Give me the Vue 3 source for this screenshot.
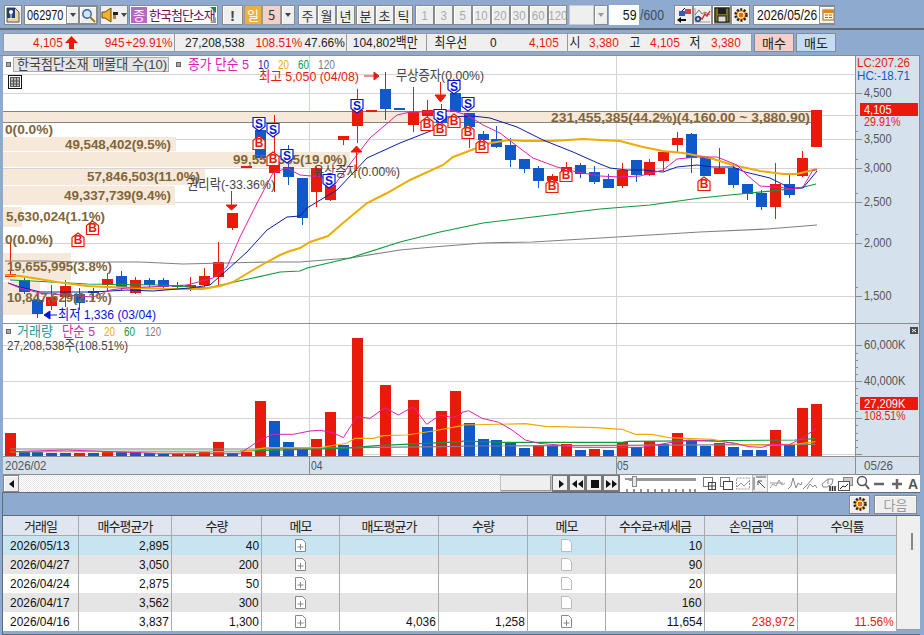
<template>
  <div class="screen">
    <div class="toolbar">
      <button class="tb note">
        <svg width="16" height="16" viewBox="0 0 16 16">
          <path d="M2 1h8l4 4v10H2z" fill="#e8d9a8" stroke="#555" />
          <rect x="2" y="1" width="8" height="10" fill="#243f78" />
          <circle cx="6" cy="5" r="2" fill="#fff" />
          <path d="M6 7v5" stroke="#fff" />
        </svg>
      </button>
      <div class="code-box">
        <span class="code"><span class="sq-left">062970</span></span>
        <button class="tb drop"><i class="caret"></i></button>
        <button class="tb find">
          <svg width="15" height="15" viewBox="0 0 15 15">
            <circle cx="6" cy="6" r="4.2" fill="#cfe6f7" stroke="#36619c" stroke-width="1.4" />
            <path d="M9 9l5 5" stroke="#a8761c" stroke-width="2" />
          </svg>
        </button>
      </div>
      <div class="sound">
        <svg width="19" height="16" viewBox="0 0 19 16">
          <path d="M1 5h3l6-4v14l-6-4H1z" fill="#f0b22a" stroke="#6a4a08" />
          <rect x="12" y="5" width="5" height="3" fill="#222" />
          <rect x="12" y="8" width="3" height="4" fill="#c77b12" />
        </svg>
        <i class="caret"></i>
      </div>
      <div class="name-box">
        <span class="badge">종</span>
        <span class="name">한국첨단소재</span>
        <i class="flag-top"></i>
        <i class="flag-bottom"></i>
      </div>
      <button class="tb bang">!</button>
      <div class="period">
        <span class="day">일</span>
        <span class="five">5</span>
        <button class="tb drop wide"><i class="caret"></i></button>
      </div>
      <div class="seg first"><button v-for="p in periods" :key="p" class="tb cell">{{ p }}</button></div>
      <div class="seg"><button v-for="p in minutes" :key="p" class="tb cell">{{ p }}</button></div>
      <div class="seg nums"><button v-for="n in numbers" :key="n" class="tb cell off"><span class="sq-mid">{{ n }}</span></button></div>
      <div class="blank-combo">
        <span></span>
        <button class="tb drop wide"><i class="caret light"></i></button>
      </div>
      <span class="count"><span class="sq-right">59</span></span>
      <span class="total"><span class="sq-left">/600</span></span>
      <div class="tools">
        <button class="tb tool">
          <svg width="16" height="16" viewBox="0 0 16 16">
            <rect x="9" y="2" width="6" height="5" fill="#d8403a" />
            <rect x="3" y="4" width="6" height="5" fill="#2f5fb5" />
            <path d="M1 13l4-3v2h5v2H5v2z" fill="#111" />
            <path d="M6 4l3-3" stroke="#111" />
          </svg>
        </button>
        <button class="tb tool">
          <svg width="17" height="16" viewBox="0 0 17 16">
            <path d="M1 1v14h15" stroke="#999" fill="none" />
            <path d="M1 8l4-5 3 4 3-2 5 3" stroke="#777" fill="none" />
            <path d="M4 9l4 3 3-5 2 2 3-5" stroke="#e0201c" fill="none" stroke-width="1.4" />
            <circle cx="4" cy="12" r="3" fill="#1c3f7a" />
            <path d="M2.500 12h3M4 10.500v3" stroke="#fff" />
          </svg>
        </button>
        <button class="tb tool dark">
          <svg width="16" height="16" viewBox="0 0 16 16">
            <rect x="1" y="1" width="14" height="14" fill="#7a7420" stroke="#111" />
            <rect x="4" y="1" width="8" height="6" fill="#222" />
            <rect x="4" y="9" width="8" height="6" fill="#ddd" stroke="#222" />
          </svg>
        </button>
        <button class="tb tool">
          <svg width="16" height="16" viewBox="0 0 16 16">
            <circle cx="8" cy="8" r="5.500" fill="#f4a21c" stroke="#222" stroke-width="2.500" stroke-dasharray="2 1.500" />
            <circle cx="8" cy="8" r="3" fill="#e8671a" stroke="#fff" />
          </svg>
        </button>
      </div>
      <div class="date-box">
        <span class="sq-left">2026/05/26</span>
        <button class="tb cal">
          <svg width="13" height="12" viewBox="0 0 13 12">
            <rect x="1" y="1" width="11" height="10" fill="#fff6d8" stroke="#a5671a" />
            <rect x="1" y="1" width="11" height="3" fill="#d88a20" />
            <path d="M3 6h3M7 6h3M3 8.500h3M7 8.500h3" stroke="#c05a10" />
          </svg>
        </button>
      </div>
    </div>

    <div class="divider"></div>

    <div class="infobar">
      <div class="cells">
        <div v-for="(cell, c) in infoCells" :key="c" class="info-cell" :style="{ width: cell.w + 'px' }">
          <span
            v-for="(it, i) in cell.items"
            :key="i"
            class="info-item"
            :class="it.c"
            :style="{ width: it.w + 'px' }"
          ><span class="sq-right">{{ it.t }}</span><svg v-if="it.up" class="up" width="13" height="13" viewBox="0 0 13 13"><path d="M6.500 0L13 7H9v6H4V7H0z" fill="#ea1a0a" /></svg></span>
        </div>
      </div>
      <button class="trade buy">매수</button>
      <button class="trade sell">매도</button>
    </div>

    <div class="chart-wrap">
      <svg class="chart" width="917" height="419" viewBox="3 56 917 419">
        <!-- 그리드 -->
        <rect x="3" y="56" width="852" height="419" fill="#fff" />
        <line v-for="y in gridY" :key="'g' + y" x1="3" x2="855" :y1="y" :y2="y" class="grid" />
        <line v-for="x in [309.500, 616.500]" :key="'v' + x" :x1="x" :x2="x" y1="56" y2="456" class="grid" />

        <!-- 매물대 -->
        <rect v-for="(b, i) in bands" :key="'b' + i" :x="3" :y="b.y" :width="b.w" :height="b.h" fill="#f6e9d9" />
        <line x1="3" x2="811" y1="111.500" y2="111.500" stroke="#8a8378" />
        <line x1="3" x2="811" y1="122.500" y2="122.500" stroke="#8a8378" />

        <!-- 캔들 -->
        <g v-for="c in candles" :key="'c' + c.i">
          <line :x1="c.x" :x2="c.x" :y1="c.wt" :y2="c.wb" :stroke="c.color" />
          <rect :x="c.x - 5.500" :y="c.top" width="11" :height="c.h" :fill="c.color" />
        </g>

        <!-- 이동평균 -->
        <polyline v-for="l in maLines" :key="l.k" :points="l.pts" fill="none" :stroke="l.color" :stroke-width="l.sw" />

        <!-- 매물대 라벨 -->
        <text
          v-for="(t, i) in bandTexts"
          :key="'t' + i"
          :x="t.x"
          :y="t.y"
          :textLength="t.len"
          lengthAdjust="spacingAndGlyphs"
          class="band-text"
        >{{ t.t }}</text>

        <!-- 주석 화살표 -->
        <path d="M364 76h10M374 72l5 4-5 4z" stroke="#ea1a0a" fill="#ea1a0a" />
        <path d="M57 315H50M50 311l-6 4 6 4z" stroke="#0a14d8" fill="#0a14d8" />
        <g v-for="a in arrows" :key="a.x + '-' + a.tip" fill="#ea1a0a" stroke="#ea1a0a">
          <line :x1="a.x" :x2="a.x" :y1="a.from" :y2="a.tip" />
          <path :d="a.head" />
        </g>

        <!-- 범례 상자 -->
        <rect x="6.500" y="62.500" width="4" height="4" fill="#aaa" stroke="#666" />
        <rect x="13.500" y="57.500" width="155" height="14" fill="#e6e6e6" stroke="#aaa" />
        <rect x="176.500" y="62.500" width="4" height="4" fill="#aaa" stroke="#666" />
        <rect x="8.500" y="75.500" width="13" height="13" fill="#fff" stroke="#111" />
        <rect x="10.500" y="77.500" width="9" height="9" fill="#bbb" stroke="#555" />
        <path d="M13.500 78v8M16.500 78v8M11 81h8M11 84h8" stroke="#555" />

        <!-- 거래량 -->
        <rect x="6.500" y="329.500" width="4" height="4" fill="#aaa" stroke="#666" />
        <rect
          v-for="b in volBars"
          :key="'vb' + b.i"
          :x="b.x - 5.500"
          :y="b.y"
          width="11"
          :height="456 - b.y"
          :fill="b.color"
        />
        <polyline v-for="l in volLines" :key="l.k" :points="l.pts" fill="none" :stroke="l.color" :stroke-width="l.sw" />

        <!-- 가격축 -->
        <rect x="855" y="56" width="65" height="419" fill="#d6e1ee" />
        <rect x="3" y="457" width="852" height="18" fill="#d6e1ee" />
        <line x1="3" x2="920" y1="323.500" y2="323.500" stroke="#8d8d8d" />
        <line x1="855.500" x2="855.500" y1="56" y2="475" stroke="#8d8d8d" />
        <line x1="3" x2="920" y1="456.500" y2="456.500" stroke="#8d8d8d" />
        <line x1="3" x2="920" y1="474.500" y2="474.500" stroke="#8d8d8d" />
        <line x1="309.500" x2="309.500" y1="457" y2="474" stroke="#8d8d8d" />
        <line x1="616.500" x2="616.500" y1="457" y2="474" stroke="#8d8d8d" />
        <line x1="919.500" x2="919.500" y1="56" y2="475" stroke="#8d8d8d" />
        <line
          v-for="t in axisTicks"
          :key="'at' + t.y"
          x1="856"
          :x2="t.major ? 862 : 858"
          :y1="t.y"
          :y2="t.y"
          stroke="#8d8d8d"
        />
        <rect x="860" y="103" width="58" height="13" fill="#ea1a0a" />
        <rect x="860" y="397" width="58" height="13" fill="#ea1a0a" />
        <rect x="910" y="327" width="8" height="7" fill="#4a4a4a" />
        <path d="M912 329l4 3M916 329l-4 3" stroke="#fff" />

        <!-- 글자 -->
        <text
          v-for="l in labels"
          :key="l.t + l.y"
          :x="l.x"
          :y="l.y"
          :textLength="l.len"
          lengthAdjust="spacingAndGlyphs"
          class="lbl"
          :class="l.c"
        >{{ l.t }}</text>

        <!-- 매매 마커 -->
        <g v-for="(m, i) in markers" :key="'m' + i">
          <path v-if="m.t === 'S'" :d="sPath(m.x, m.y)" fill="#fff" stroke="#0a14d8" stroke-width="1.200" />
          <path v-else :d="bPath(m.x, m.y)" fill="#fff" stroke="#ea1a0a" stroke-width="1.200" />
          <text :x="m.x" :y="m.y + 4" class="mk" :class="m.t === 'S' ? 'blue' : 'red'">{{ m.t }}</text>
        </g>
      </svg>
    </div>

    <div class="scrollrow">
      <button class="tb sbtn first-btn"><i class="tri-left"></i></button>
      <div class="track"></div>
      <div class="thumb"></div>
      <button class="tb pbtn">
        <svg width="10" height="10" viewBox="0 0 10 10"><path d="M3 1l5 4-5 4z" fill="#111" /></svg>
      </button>
      <button class="tb pbtn">
        <svg width="11" height="10" viewBox="0 0 11 10"><path d="M5 1L0 5l5 4zM11 1L6 5l5 4z" fill="#111" /></svg>
      </button>
      <button class="tb pbtn">
        <svg width="10" height="10" viewBox="0 0 10 10"><rect x="1" y="1" width="8" height="8" fill="#111" /></svg>
      </button>
      <button class="tb pbtn">
        <svg width="11" height="10" viewBox="0 0 11 10"><path d="M0 1l5 4-5 4zM6 1l5 4-5 4z" fill="#111" /></svg>
      </button>
      <div class="slider">
        <svg width="76" height="17" viewBox="0 0 76 17">
          <rect x="5" y="3" width="67" height="3" fill="#999" />
          <rect x="1" y="3" width="4" height="2" fill="#999" />
          <rect x="8.500" y="1.500" width="4" height="10" fill="#e8e8e8" stroke="#888" />
          <path d="M3 14v3M10 14v3M17 14v3M24 14v3M31 14v3M38 14v3M45 14v3M52 14v3M59 14v3M66 14v3M71 14v3" stroke="#222" />
        </svg>
      </div>
      <svg class="chart-tools" width="218" height="17" viewBox="0 0 218 17">
        <g fill="none" stroke="#777">
          <rect x="1.500" y="2.500" width="9" height="9" />
          <rect x="6.500" y="7.500" width="7" height="7" fill="#fff" stroke="#444" />
          <path d="M10 8v6M7 11h6" stroke="#444" />
          <rect x="18.500" y="2.500" width="9" height="9" />
          <rect x="21.500" y="6.500" width="9" height="8" fill="#fff" stroke="#444" />
          <path d="M34.500 3h13v11h-13z" stroke-dasharray="2 1" stroke="#999" />
          <path d="M35 12l4-4 3 3 5-5" stroke="#999" />
        </g>
        <rect x="50.500" y="0" width="15" height="17" fill="#f4f4f4" stroke="#bbb" />
        <g fill="none" stroke="#555">
          <path d="M52 2v13M54 2h10M56 6l7 7M56 6h4M56 6v4" />
          <path d="M68 13l3-4 3 2 3-6 3 5 3-2M68 8h13" stroke="#999" />
          <path d="M86 14l3-3 2-8 3 10 2-5 3 2 1-3" stroke="#888" />
          <path d="M101 14l4-4 6-7M105 14l3-5 3 3 2-2 2 3" stroke="#888" />
          <path d="M120 9l6-5h5l-1 5-5 3h-4zM126 4v5" stroke="#888" />
          <path d="M128 16v-5M130.500 16v-5M133 16v-5" stroke="#222" stroke-width="1.500" />
          <rect x="141.500" y="2.500" width="9" height="8" fill="#ccc" stroke="#888" />
          <rect x="136.500" y="6.500" width="11" height="9" fill="#fff" />
          <path d="M138 14l3-3 2 1 3-3" stroke="#222" />
          <circle cx="160" cy="6" r="4.500" stroke-width="1.500" />
          <path d="M163 9l4 5" stroke-width="2" />
          <path d="M172 9h10M190 9h10M195 4v10" stroke="#666" stroke-width="2.500" />
        </g>
        <text x="206" y="14" class="aa">A</text>
      </svg>
    </div>

    <div class="bottom">
      <div class="bottom-bar">
        <button class="tb gear">
          <svg width="16" height="16" viewBox="0 0 16 16">
            <circle cx="8" cy="8" r="5.500" fill="#f4a21c" stroke="#222" stroke-width="2.500" stroke-dasharray="2 1.500" />
            <circle cx="8" cy="8" r="3" fill="#e8671a" stroke="#fff" />
          </svg>
        </button>
        <button class="tb next">다음</button>
      </div>
      <div class="table-row">
        <table class="grid-table">
          <colgroup>
            <col v-for="w in colWidths" :key="w.k" :style="{ width: w.w + 'px' }" />
          </colgroup>
          <thead>
            <tr>
              <th v-for="h in headers" :key="h.k">{{ h.t }}</th>
            </tr>
          </thead>
          <tbody>
            <tr v-for="(r, i) in rows" :key="r.date" :class="rowClass(i)">
              <td class="date"><span class="sq-mid">{{ r.date }}</span></td>
              <td><span class="sq-right">{{ r.buy }}</span></td>
              <td><span class="sq-right">{{ r.qty }}</span></td>
              <td class="memo">
                <svg width="11" height="13" viewBox="0 0 11 13">
                  <path d="M.5.5h7l3 3v9H.5z" fill="#fff" stroke="#888" />
                  <path d="M5.500 5v6M2.500 8h6" stroke="#888" />
                </svg>
              </td>
              <td><span class="sq-right">{{ r.sell }}</span></td>
              <td><span class="sq-right">{{ r.sellQty }}</span></td>
              <td class="memo">
                <svg width="11" height="13" viewBox="0 0 11 13">
                  <path d="M.5.5h7l3 3v9H.5z" fill="#fff" :stroke="r.sell ? '#888' : '#bbb'" />
                  <path v-if="r.sell" d="M5.500 5v6M2.500 8h6" stroke="#888" />
                </svg>
              </td>
              <td><span class="sq-right">{{ r.fee }}</span></td>
              <td class="up-txt"><span class="sq-right">{{ r.pl }}</span></td>
              <td class="up-txt"><span class="sq-right">{{ r.rate }}</span></td>
            </tr>
          </tbody>
        </table>
        <div class="vscroll"><i></i></div>
      </div>
    </div>
  </div>
</template>

<script setup>
const RED = "#ea1a0a";
const BLU = "#1159c8";

const periods = ["주", "월", "년"];
const minutes = ["분", "초", "틱"];
const numbers = ["1", "3", "5", "10", "20", "30", "60", "120"];

const infoCells = [
  {
    w: 171,
    items: [
      { t: "4,105", w: 74, c: "up-txt", up: true },
      { t: "945", w: 47, c: "up-txt" },
      { t: "+29.91%", w: 48, c: "up-txt" },
    ],
  },
  {
    w: 172,
    items: [
      { t: "27,208,538", w: 70 },
      { t: "108.51%", w: 58, c: "up-txt" },
      { t: "47.66%", w: 42 },
    ],
  },
  { w: 81, items: [{ t: "104,802백만", w: 71 }] },
  {
    w: 141,
    items: [
      { t: "최우선", w: 40 },
      { t: "0", w: 29 },
      { t: "4,105", w: 62, c: "up-txt" },
    ],
  },
  {
    w: 183,
    items: [
      { t: "시", w: 12 },
      { t: "3,380", w: 39, c: "up-txt" },
      { t: "고", w: 21 },
      { t: "4,105", w: 40, c: "up-txt" },
      { t: "저", w: 20 },
      { t: "3,380", w: 41, c: "up-txt" },
    ],
  },
];

// 가로 그리드 (가격 + 거래량)
const gridY = [74.5, 93.5, 115.5, 139.5, 168.5, 202.5, 243.5, 296.5, 345.5, 381.5, 418.5, 454.5];

const bands = [
  { y: 112, h: 10, w: 808 },
  { y: 137, h: 14, w: 173 },
  { y: 152, h: 15, w: 347 },
  { y: 169, h: 16, w: 202 },
  { y: 186, h: 19, w: 172 },
  { y: 207, h: 20, w: 19 },
  { y: 253, h: 27, w: 68 },
  { y: 282, h: 33, w: 37 },
];

const bandTexts = [
  { x: 551, y: 122, len: 259, t: "231,455,385(44.2%)(4,160.00 ~ 3,880.90)" },
  { x: 5, y: 134, len: 48, t: "0(0.0%)" },
  { x: 65, y: 149, len: 106, t: "49,548,402(9.5%)" },
  { x: 233, y: 164, len: 114, t: "99,555,365(19.0%)" },
  { x: 87, y: 181, len: 113, t: "57,846,503(11.0%)" },
  { x: 64, y: 200, len: 107, t: "49,337,739(9.4%)" },
  { x: 6, y: 221, len: 99, t: "5,630,024(1.1%)" },
  { x: 5, y: 244, len: 48, t: "0(0.0%)" },
  { x: 7, y: 271, len: 105, t: "19,655,995(3.8%)" },
  { x: 7, y: 302, len: 105, t: "10,847,629(2.1%)" },
];

// 차트 위 글자: 범례, 주석, 축 눈금
const labels = [
  { x: 17, y: 69, len: 150, t: "한국첨단소재 매물대 수(10)", c: "ink" },
  { x: 188, y: 69, len: 61, t: "종가 단순 5", c: "mag" },
  { x: 258, y: 69, len: 11, t: "10", c: "navy" },
  { x: 278, y: 69, len: 11, t: "20", c: "orange" },
  { x: 298, y: 69, len: 11, t: "60", c: "green" },
  { x: 318, y: 69, len: 17, t: "120", c: "gray" },
  { x: 259, y: 81, len: 100, t: "최고 5,050 (04/08)", c: "red" },
  { x: 396, y: 80, len: 88, t: "무상증자(0.00%)", c: "ink" },
  { x: 187, y: 189, len: 88, t: "권리락(-33.36%)", c: "ink" },
  { x: 313, y: 176, len: 87, t: "유상증자(0.00%)", c: "ink" },
  { x: 58, y: 319, len: 98, t: "최저 1,336 (03/04)", c: "blue" },
  { x: 17, y: 336, len: 36, t: "거래량", c: "teal" },
  { x: 62, y: 336, len: 33, t: "단순 5", c: "mag" },
  { x: 104, y: 336, len: 11, t: "20", c: "orange" },
  { x: 124, y: 336, len: 11, t: "60", c: "green" },
  { x: 145, y: 336, len: 16, t: "120", c: "gray" },
  { x: 7, y: 350, len: 121, t: "27,208,538주(108.51%)", c: "ink" },
  { x: 857, y: 67, len: 53, t: "LC:207.26", c: "red" },
  { x: 857, y: 80, len: 53, t: "HC:-18.71", c: "bluehc" },
  { x: 864, y: 97, len: 27.5, t: "4,500", c: "dim" },
  { x: 864, y: 143, len: 27.5, t: "3,500", c: "dim" },
  { x: 864, y: 172, len: 27.5, t: "3,000", c: "dim" },
  { x: 864, y: 206, len: 27.5, t: "2,500", c: "dim" },
  { x: 864, y: 247, len: 27.5, t: "2,000", c: "dim" },
  { x: 864, y: 300, len: 27.5, t: "1,500", c: "dim" },
  { x: 864, y: 349, len: 41.5, t: "60,000K", c: "dim" },
  { x: 864, y: 385, len: 41.5, t: "40,000K", c: "dim" },
  { x: 864, y: 114, len: 27.5, t: "4,105", c: "white" },
  { x: 864, y: 126, len: 36.5, t: "29.91%", c: "red" },
  { x: 864, y: 408, len: 41.5, t: "27,209K", c: "white" },
  { x: 864, y: 420, len: 41.5, t: "108.51%", c: "red" },
  { x: 5, y: 470, len: 41.5, t: "2026/02", c: "dim" },
  { x: 311, y: 470, len: 11.5, t: "04", c: "dim" },
  { x: 617, y: 470, len: 11.5, t: "05", c: "dim" },
  { x: 864, y: 470, len: 29, t: "05/26", c: "dim" },
];

// [색, 몸통위, 몸통아래, 꼬리위, 꼬리아래]
const rawCandles = [
  ["r", 274, 277, 243, 277], ["b", 280, 292, 278, 294], ["b", 300, 314, 292, 318], ["r", 297, 306, 285, 310],
  ["r", 286, 297, 280, 307], ["b", 294, 303, 288, 310], ["b", 291, 292, 288, 300], ["r", 279, 285, 273, 292],
  ["b", 276, 287, 271, 290], ["r", 280, 293, 277, 294], ["b", 280, 285, 278, 289], ["b", 280, 287, 278, 288],
  ["b", 285, 287, 282, 290], ["r", 285, 287, 277, 291], ["r", 276, 285, 268, 287], ["r", 262, 277, 242, 287],
  ["r", 213, 228, 213, 230], ["r", 166, 167, 166, 167], ["b", 130, 158, 128, 160], ["r", 163, 173, 115, 192],
  ["b", 167, 177, 145, 185], ["b", 178, 218, 178, 225], ["r", 168, 192, 167, 207], ["r", 185, 200, 185, 201],
  ["r", 136, 140, 136, 145], ["r", 110, 126, 89, 143], ["r", 110, 111, 110, 111], ["b", 89, 109, 72, 120],
  ["b", 108, 109, 108, 109], ["r", 112, 125, 87, 132], ["r", 110, 116, 100, 120], ["b", 115, 123, 104, 130],
  ["b", 93, 112, 92, 112], ["b", 113, 127, 113, 148], ["b", 134, 140, 131, 146], ["b", 139, 147, 126, 148],
  ["b", 145, 160, 138, 167], ["b", 159, 169, 159, 173], ["b", 168, 181, 166, 188], ["r", 176, 181, 174, 182],
  ["r", 167, 181, 162, 182], ["b", 165, 174, 163, 178], ["b", 172, 182, 166, 184], ["b", 179, 188, 174, 188],
  ["r", 170, 186, 163, 188], ["b", 160, 175, 160, 182], ["r", 162, 175, 159, 176], ["r", 152, 161, 152, 171],
  ["r", 138, 145, 132, 153], ["b", 134, 158, 133, 173], ["b", 157, 176, 157, 176], ["r", 168, 174, 148, 174],
  ["b", 168, 185, 164, 188], ["b", 184, 194, 184, 200], ["b", 193, 207, 190, 210], ["r", 184, 207, 163, 219],
  ["b", 184, 195, 173, 198], ["r", 158, 176, 151, 177], ["r", 110, 147, 110, 147],
];

const xAt = (i) => Math.round(9.6 + 13.91 * i) + 0.5;

const candles = rawCandles.map((c, i) => ({
  i,
  x: xAt(i),
  color: c[0] === "r" ? RED : BLU,
  top: c[1],
  h: Math.max(c[2] - c[1], 2),
  wt: c[3],
  wb: c[4],
}));

const maLines = [
  {
    k: "ma120",
    color: "#808080",
    sw: 1.2,
    pts: "5,261 43,261 77,262 140,262 183,264 267,262 300,262 350,258 400,250 433,247 483,243 533,242 600,238 650,235 700,232 767,229 817,225",
  },
  {
    k: "ma60",
    color: "#0f9a3c",
    sw: 1.2,
    pts: "10,280 33,281 87,284 160,285 207,288 230,283 253,278 280,272 300,271 307,268 350,258 400,242 440,232 483,223 533,217 600,209 650,205 700,198 740,194 800,188 816,184",
  },
  {
    k: "ma20",
    color: "#efab05",
    sw: 2,
    pts: "5,275 20,276 33,278 57,282 87,286 107,287 140,288 167,289 203,289 220,286 233,282 253,270 267,262 280,255 290,251 300,248 310,242 328,236 343,223 367,203 387,193 410,180 443,165 453,157 477,148 490,143 510,140 523,141 553,141 583,139 600,140 620,141 643,147 663,151 683,153 710,158 733,165 760,171 783,174 797,174 817,169",
  },
  {
    k: "ma10",
    color: "#0a1fa8",
    sw: 1,
    pts: "8,283 20,287 40,292 67,292 93,292 127,290 153,291 190,288 210,285 227,270 247,252 267,230 287,217 300,216 307,208 337,190 367,158 400,143 433,130 447,117 473,116 490,118 517,127 543,140 573,152 600,164 610,168 627,170 643,170 663,172 677,167 697,165 713,167 733,167 745,172 770,178 790,188 803,188 817,171",
  },
  {
    k: "ma5",
    color: "#e020b0",
    sw: 1,
    pts: "8,283 20,288 40,293 67,295 93,297 110,290 127,288 147,287 187,285 213,278 227,267 240,237 257,203 273,173 287,168 300,175 323,177 333,187 353,160 370,138 397,115 410,112 437,112 450,110 467,115 483,125 500,133 513,143 533,158 557,167 577,172 600,176 620,177 640,176 663,170 677,159 697,157 717,157 737,165 747,175 760,186 777,187 793,189 803,187 813,170 817,170",
  },
];

const volTops = [
  [324, "r"], [381, "b"], [381, "b"], [384, "b"], [384, "b"], [384, "r"], [384, "b"], [381, "r"], [381, "b"], [381, "b"],
  [384, "b"], [387, "b"], [387, "r"], [387, "r"], [381, "r"], [351, "r"], [384, "b"], [381, "r"], [228, "r"], [288, "b"],
  [351, "b"], [372, "b"], [342, "r"], [261, "r"], [360, "b"], [39, "r"], null, [180, "r"], null, [225, "r"],
  [306, "b"], [258, "r"], [198, "r"], [294, "b"], [342, "b"], [345, "b"], [354, "b"], [369, "b"], [360, "r"], [363, "b"],
  [357, "r"], [375, "b"], [372, "r"], [375, "b"], [351, "r"], [366, "b"], [348, "r"], [357, "b"], [324, "r"], [345, "b"],
  [363, "b"], [354, "r"], [366, "b"], [375, "b"], [375, "b"], [315, "r"], [360, "b"], [249, "r"], [237, "r"],
];

const volBars = volTops
  .map((v, i) =>
    v ? { i, x: xAt(i), y: Math.round(325 + v[0] / 3), color: v[1] === "r" ? RED : BLU } : null
  )
  .filter(Boolean);

// 확대 화면 좌표(3배)를 페이지 좌표로 바꾼다
const fromZoom = (left, right) =>
  [
    ...left.map(([x, y]) => `${(x / 3).toFixed(1)},${(325 + y / 3).toFixed(1)}`),
    ...right.map(([x, y]) => `${(462 + x / 3).toFixed(1)},${(325 + y / 3).toFixed(1)}`),
  ].join(" ");

const volLines = [
  {
    k: "v120",
    color: "#808080",
    sw: 1.2,
    pts: fromZoom([[30, 372], [720, 372], [1130, 367], [1386, 364]], [[0, 363], [1060, 358]]),
  },
  {
    k: "v60",
    color: "#0f9a3c",
    sw: 1.2,
    pts: fromZoom([[30, 380], [720, 378], [1030, 370], [1130, 362], [1386, 350]], [[0, 348], [120, 352], [480, 352], [500, 349], [1000, 345], [1060, 341]]),
  },
  {
    k: "v20",
    color: "#efab05",
    sw: 1.2,
    pts: fromZoom(
      [[30, 380], [170, 380], [460, 380], [720, 380], [800, 368], [960, 368], [1040, 355], [1065, 340], [1120, 340], [1150, 332], [1220, 330], [1300, 318], [1386, 302]],
      [[0, 300], [190, 296], [250, 304], [400, 308], [480, 313], [520, 328], [570, 328], [620, 338], [750, 343], [830, 358], [930, 360], [1000, 358], [1060, 350]]
    ),
  },
  {
    k: "v5",
    color: "#e020b0",
    sw: 1,
    pts: fromZoom(
      [[30, 380], [200, 375], [470, 385], [600, 385], [720, 385], [750, 365], [780, 345], [820, 328], [880, 328], [930, 318], [960, 316], [1000, 323], [1030, 338], [1070, 275], [1110, 280], [1155, 248], [1195, 270], [1240, 245], [1280, 298], [1320, 270], [1360, 278], [1386, 265]],
      [[0, 262], [20, 257], [60, 280], [110, 292], [150, 315], [190, 345], [230, 355], [290, 360], [340, 367], [460, 367], [540, 367], [630, 352], [680, 345], [780, 350], [820, 355], [860, 365], [900, 367], [930, 358], [980, 360], [1020, 340], [1060, 313]]
    ),
  },
];

const axisTicks = [
  ...[93.5, 139.5, 168.5, 202.5, 243.5, 296.5, 345.5, 381.5, 418.5, 454.5].map((y) => ({ y, major: true })),
  ...[115.5, 131.5, 159.5, 193.5, 234.5, 287.5, 353.5, 360.5, 367.5, 374.5, 388.5, 395.5, 403.5, 411.5, 425.5, 433.5, 440.5, 447.5].map((y) => ({
    y,
    major: false,
  })),
];

const arrows = [
  { x: 231.5, from: 191, tip: 205, head: "M226 205h11l-5.500 5z" },
  { x: 356.5, from: 170, tip: 152, head: "M351 152h11l-5.500-6z" },
  { x: 440.5, from: 82, tip: 95, head: "M435 95h11l-5.500 7z" },
];

const markers = [
  { t: "B", x: 78, y: 240 },
  { t: "B", x: 92.5, y: 228 },
  { t: "B", x: 259, y: 143 },
  { t: "B", x: 273, y: 159 },
  { t: "B", x: 427, y: 124 },
  { t: "B", x: 440, y: 129 },
  { t: "B", x: 454, y: 121 },
  { t: "B", x: 468, y: 132 },
  { t: "B", x: 482, y: 146 },
  { t: "B", x: 552, y: 186 },
  { t: "B", x: 566, y: 175 },
  { t: "B", x: 704, y: 184 },
  { t: "S", x: 259, y: 124 },
  { t: "S", x: 273, y: 130 },
  { t: "S", x: 287, y: 156 },
  { t: "S", x: 329, y: 181 },
  { t: "S", x: 357, y: 106 },
  { t: "S", x: 440, y: 116 },
  { t: "S", x: 454, y: 87 },
  { t: "S", x: 468, y: 104 },
];

const sPath = (x, y) => `M${x - 6} ${y - 6.5}h12v9l-6 4.5-6-4.5z`;
const bPath = (x, y) => `M${x - 6} ${y + 6.5}h12v-9l-6-4.5-6 4.5z`;

const colWidths = [76, 93, 90, 78, 99, 89, 78, 99, 93, 99].map((w, k) => ({ k, w }));
const headers = ["거래일", "매수평균가", "수량", "메모", "매도평균가", "수량", "메모", "수수료+제세금", "손익금액", "수익률"].map(
  (t, k) => ({ k, t })
);

const rows = [
  { date: "2026/05/13", buy: "2,895", qty: "40", sell: "", sellQty: "", fee: "10", pl: "", rate: "" },
  { date: "2026/04/27", buy: "3,050", qty: "200", sell: "", sellQty: "", fee: "90", pl: "", rate: "" },
  { date: "2026/04/24", buy: "2,875", qty: "50", sell: "", sellQty: "", fee: "20", pl: "", rate: "" },
  { date: "2026/04/17", buy: "3,562", qty: "300", sell: "", sellQty: "", fee: "160", pl: "", rate: "" },
  { date: "2026/04/16", buy: "3,837", qty: "1,300", sell: "4,036", sellQty: "1,258", fee: "11,654", pl: "238,972", rate: "11.56%" },
];

const rowClass = (i) => (i === 0 ? "selected" : i % 2 ? "even" : "odd");
</script>

<style>
html,
body {
  margin: 0;
  background: #8eaacf;
}
</style>

<style scoped>
.screen {
  width: 924px;
  height: 635px;
  overflow: hidden;
  background: #8eaacf;
  font-family: "Liberation Sans", "Noto Sans CJK KR", sans-serif;
  font-size: 13.500px;
  color: #222;
  position: relative;
}

button {
  font: inherit;
  padding: 0;
  margin: 0;
}

/* 굴림체처럼 좁은 글자 폭 */
.sq-left,
.sq-right,
.sq-mid {
  display: inline-block;
  white-space: nowrap;
  transform: scaleX(0.88);
}

.sq-left {
  transform-origin: left center;
}

.sq-right {
  transform-origin: right center;
}

.sq-mid {
  transform-origin: center;
}

.tb {
  box-sizing: border-box;
  background: #efefef;
  border: 1px solid #8a8a8a;
  box-shadow: inset 1px 1px #fff;
  color: #333;
  display: flex;
  align-items: center;
  justify-content: center;
}

.caret {
  width: 0;
  height: 0;
  border-left: 3.500px solid transparent;
  border-right: 3.500px solid transparent;
  border-top: 4px solid #444;
  display: block;
}

.caret.light {
  border-top-color: #999;
}

/* 상단 툴바 */
.toolbar {
  display: flex;
  height: 20px;
  margin-top: 5px;
  padding-left: 4px;
  align-items: stretch;
}

.note {
  width: 18px;
  margin-right: 2px;
}

.code-box {
  box-sizing: border-box;
  width: 74px;
  display: flex;
  background: #fff;
  border: 1px solid #8a8a8a;
  margin-right: 2px;
}

.code {
  width: 41px;
  padding-left: 2px;
  box-sizing: border-box;
  line-height: 18px;
  font-size: 14px;
  color: #111;
  overflow: hidden;
}

.code .sq-left {
  transform: scaleX(0.78);
}

.date-box .sq-left {
  transform: scaleX(0.86);
}

.drop {
  width: 13px;
}

.drop.wide {
  width: 14px;
  flex: none;
}

.find {
  width: 18px;
}

.sound {
  box-sizing: border-box;
  width: 28px;
  display: flex;
  align-items: center;
  gap: 1px;
  background: #efefef;
  border: 1px solid #8a8a8a;
  margin-right: 1px;
}

.name-box {
  box-sizing: border-box;
  width: 89px;
  display: flex;
  align-items: center;
  background: #fff;
  border: 1px solid #8a8a8a;
  margin-right: 4px;
  overflow: hidden;
  position: relative;
  white-space: nowrap;
}

.badge {
  width: 16px;
  height: 16px;
  margin-left: 1px;
  background: #b568c8;
  color: #fff;
  font-family: "Noto Sans CJK KR", sans-serif;
  font-size: 13px;
  line-height: 16px;
  text-align: center;
  flex: none;
}

.name {
  margin-left: 2px;
  color: #7a0a50;
  font-family: "Noto Sans CJK KR", sans-serif;
  font-size: 13px;
  line-height: 18px;
  letter-spacing: -1px;
}

.flag-top {
  position: absolute;
  right: 1px;
  top: 1px;
  border-left: 6px solid transparent;
  border-top: 6px solid #118a3a;
}

.flag-bottom {
  position: absolute;
  right: 1px;
  bottom: 1px;
  border-left: 6px solid transparent;
  border-bottom: 6px solid #999;
}

.bang {
  width: 21px;
  margin-right: 1px;
  font-size: 15px;
  font-weight: 700;
  color: #444;
}

.period {
  display: flex;
  width: 51px;
  margin-right: 3px;
}

.day,
.five {
  width: 19px;
  box-sizing: border-box;
  text-align: center;
  line-height: 18px;
  border: 1px solid #9a9a9a;
  font-family: "Noto Sans CJK KR", sans-serif;
  font-size: 13px;
}

.day {
  width: 18px;
  background: #f0ae3c;
  color: #fff;
}

.five {
  background: #f5cfc8;
  color: #333;
}

.seg {
  display: flex;
  margin-right: 1px;
}

.seg.nums {
  margin-left: 1px;
  margin-right: 2px;
}

.cell {
  width: 19px;
  font-family: "Noto Sans CJK KR", "Liberation Sans", sans-serif;
  font-size: 13px;
}

.cell.off {
  color: #aaa;
  font-family: "Liberation Sans", sans-serif;
  font-size: 13px;
  overflow: hidden;
}

.blank-combo {
  display: flex;
  width: 39px;
  margin-right: 1px;
}

.blank-combo span {
  flex: 1;
  background: #efefef;
  border: 1px solid #c8c8c8;
}

.count {
  box-sizing: border-box;
  width: 30px;
  background: #fff;
  text-align: right;
  padding-right: 2px;
  line-height: 20px;
  font-size: 14px;
  color: #111;
}

.total {
  width: 35px;
  padding-left: 1px;
  box-sizing: border-box;
  line-height: 20px;
  font-size: 14px;
  color: #3c4a5c;
}

.tools {
  display: flex;
  margin-right: 3px;
}

.tool {
  width: 19px;
}

.tool.dark {
  background: #9c9c9c;
}

.date-box {
  box-sizing: border-box;
  width: 82px;
  display: flex;
  align-items: center;
  justify-content: space-between;
  background: #fff;
  border: 1px solid #8a8a8a;
  padding-left: 3px;
  font-size: 14px;
  color: #111;
  overflow: hidden;
}

.cal {
  width: 18px;
  height: 18px;
  flex: none;
  margin-left: -8px;
}

.divider {
  height: 2px;
  margin-top: 3px;
  background: #5f6b78;
}

/* 시세 바 */
.infobar {
  display: flex;
  height: 19px;
  margin: 3px 0 3px 3px;
}

.cells {
  display: flex;
  box-sizing: border-box;
  width: 749px;
  border: 1px solid #9a9a9a;
  background: #efefef;
  margin-right: 2px;
}

.info-cell {
  box-sizing: border-box;
  display: flex;
  border-right: 1px solid #9a9a9a;
  white-space: nowrap;
}

.info-cell:last-child {
  border-right: 0;
}

.info-item {
  display: flex;
  align-items: center;
  justify-content: flex-end;
  flex: none;
  line-height: 17px;
}

.up {
  margin-left: 2px;
  flex: none;
}

.up-txt {
  color: #ea1a0a;
}

.trade {
  box-sizing: border-box;
  width: 40px;
  height: 19px;
  margin-right: 2px;
  border: 1px solid #8a8a8a;
  font-family: "Noto Sans CJK KR", sans-serif;
  font-size: 13px;
  line-height: 16px;
  color: #222;
}

.buy {
  background: #f5cfc8;
}

.sell {
  background: #c6dcf0;
}

/* 차트 */
.chart-wrap {
  box-sizing: border-box;
  width: 920px;
  height: 420px;
  padding-left: 3px;
  border-top: 1px solid #8d8d8d;
}

.chart {
  display: block;
}

.grid {
  stroke: #d4d4d4;
  stroke-width: 1;
}

.band-text {
  font-family: "Liberation Sans", sans-serif;
  font-size: 13.500px;
  font-weight: 700;
  fill: #80653a;
}

.lbl {
  font-family: "Liberation Sans", "Noto Sans CJK KR", sans-serif;
  font-size: 13.500px;
}

.mk {
  font-family: "Liberation Sans", sans-serif;
  font-size: 12px;
  font-weight: 700;
  text-anchor: middle;
}

.red {
  fill: #ea1a0a;
}

.blue {
  fill: #0a14d8;
}

.bluehc {
  fill: #1159c8;
}

.ink {
  fill: #444;
}

.mag {
  fill: #e020b0;
}

.navy {
  fill: #0a2ab0;
}

.orange {
  fill: #efab05;
}

.green {
  fill: #0f9a3c;
}

.gray {
  fill: #808080;
}

.teal {
  fill: #2a9a9a;
}

.dim {
  fill: #555;
}

.white {
  fill: #fff;
}

/* 스크롤 줄 */
.scrollrow {
  display: flex;
  width: 917px;
  height: 17px;
  margin-left: 3px;
  background: #fff;
}

.first-btn {
  width: 16px;
  flex: none;
}

.tri-left {
  width: 0;
  height: 0;
  border-top: 4px solid transparent;
  border-bottom: 4px solid transparent;
  border-right: 5px solid #111;
}

.track {
  flex: 0 0 481px;
  background: repeating-conic-gradient(#fff 0 25%, #e6e6e6 0 50%) 0 0 / 2px 2px;
}

.thumb {
  box-sizing: border-box;
  width: 52px;
  flex: none;
  background: #efefef;
  border: 1px solid #c4c4c4;
  box-shadow: inset -1px -1px #999;
}

.pbtn {
  width: 17px;
  flex: none;
  background: #f1f1f1;
  border: 1px solid #777;
  box-shadow: inset -1px -1px #777;
}

.slider {
  width: 76px;
  flex: none;
  margin-left: 4px;
}

.chart-tools {
  flex: none;
  margin-left: 2px;
}

.aa {
  font-family: "Liberation Sans", sans-serif;
  font-size: 14px;
  font-weight: 700;
  fill: #555;
}

/* 하단 매매내역 */
.bottom {
  box-sizing: border-box;
  width: 918px;
  height: 143px;
  margin-left: 2px;
  border-top: 1px solid #5f6b78;
  border-left: 1px solid #5f6b78;
  border-bottom: 1px solid #5f6b78;
}

.bottom-bar {
  height: 22px;
  display: flex;
  justify-content: flex-end;
  align-items: center;
  gap: 4px;
  padding-right: 3px;
  box-sizing: border-box;
}

.gear {
  width: 21px;
  height: 19px;
}

.next {
  width: 43px;
  height: 19px;
  font-family: "Noto Sans CJK KR", sans-serif;
  font-size: 13px;
  color: #999;
}

.table-row {
  display: flex;
  height: 115px;
  border-top: 1px solid #5f6b78;
  border-bottom: 1px solid #9a9a9a;
  box-sizing: border-box;
}

.grid-table {
  width: 894px;
  border-collapse: separate;
  border-spacing: 0;
  table-layout: fixed;
  flex: none;
}

.grid-table th {
  height: 18px;
  padding: 0;
  background: #e0e6ef;
  border-right: 1px solid #aaa;
  border-bottom: 1px solid #aaa;
  box-sizing: border-box;
  font-weight: 400;
  font-family: "Noto Sans CJK KR", sans-serif;
  font-size: 13px;
  letter-spacing: -1px;
  color: #222;
  overflow: hidden;
  white-space: nowrap;
}

.grid-table td {
  height: 19px;
  padding: 0 2px 0 0;
  box-sizing: border-box;
  border-right: 1px solid #aaa;
  text-align: right;
  color: #111;
  line-height: 18px;
}

.grid-table td.date {
  text-align: center;
}

.grid-table td.up-txt {
  color: #ea1a0a;
}

.grid-table td.memo {
  text-align: center;
  padding: 0;
}

.memo svg {
  display: block;
  margin: 0 auto;
}

.selected td {
  background: #c8e4f1;
}

.even td {
  background: #e5e5e5;
}

.odd td {
  background: #fff;
}

.vscroll {
  flex: 1;
  background: #efefef;
  position: relative;
}

.vscroll i {
  position: absolute;
  left: 14px;
  top: 17px;
  width: 2px;
  height: 17px;
  background: #888;
}
</style>
